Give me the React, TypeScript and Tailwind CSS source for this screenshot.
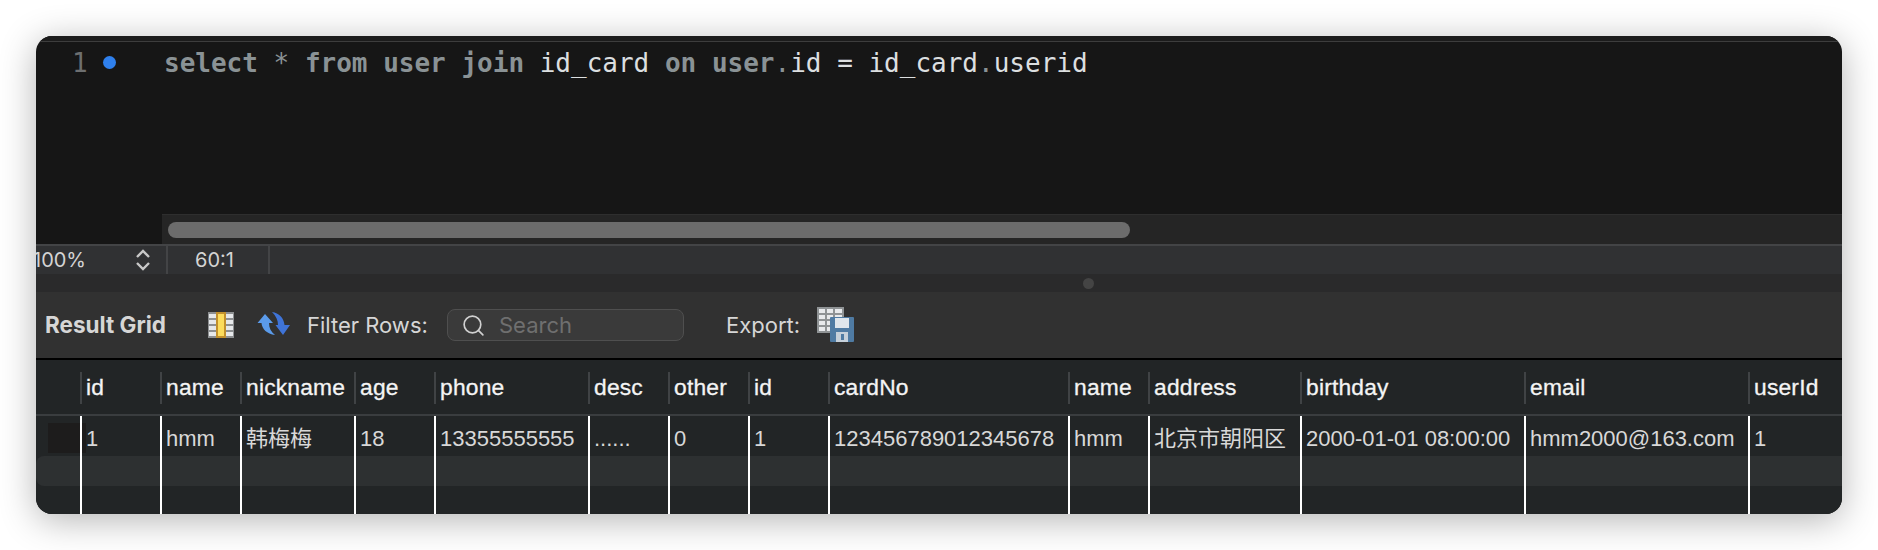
import { Search } from 'lucide-react'

const columns = ['', 'id', 'name', 'nickname', 'age', 'phone', 'desc', 'other', 'id', 'cardNo', 'name', 'address', 'birthday', 'email', 'userId']
const values = ['', '1', 'hmm', '韩梅梅', '18', '13355555555', '......', '0', '1', '123456789012345678', 'hmm', '北京市朝阳区', '2000-01-01 08:00:00', 'hmm2000@163.com', '1']
const gridCols = 'grid grid-cols-[44px_80px_80px_114px_80px_154px_80px_80px_80px_240px_80px_152px_224px_224px_93px]'

function ColumnsIcon() {
  return (
    <svg width="28" height="28" viewBox="0 0 28 28" className="shrink-0">
      <rect x="1" y="1" width="26" height="26" fill="#8d8f91" />
      {[3, 9, 15, 21].map((y) => (
        <g key={y}>
          <rect x="2" y={y} width="7" height="4" fill="#e6e8ea" />
          <rect x="19" y={y} width="7" height="4" fill="#e6e8ea" />
        </g>
      ))}
      <rect x="9" y="1" width="10" height="26" fill="#c2902c" />
      <rect x="11" y="3" width="6" height="22" fill="#fcdc5c" />
    </svg>
  )
}

function RefreshIcon() {
  return (
    <svg width="34" height="28" viewBox="7 6 34 28" className="shrink-0">
      <path d="M15 9 L23 18 L19 18 C19 23 21 27 25 30 C17 29 12 24 11.5 18 L7.5 18 Z" fill="#5b9bea" />
      <path d="M22 7 C29 8 34 13 34.5 20 L40 20 L33 30 L25.5 20 L28 20 C28 15 26 11 22 7 Z" fill="#3f74d8" />
    </svg>
  )
}

function ExportIcon() {
  return (
    <svg width="38" height="36" viewBox="0 0 38 36" className="shrink-0">
      <rect x="0" y="0" width="27" height="26" fill="#8f9395" />
      {[2, 8, 14, 20].map((y) => (
        <g key={y}>
          <rect x="2" y={y} width="6" height="4" fill="#e8eaec" />
          <rect x="10" y={y} width="6" height="4" fill="#e8eaec" />
          <rect x="18" y={y} width="7" height="4" fill="#e8eaec" />
        </g>
      ))}
      <rect x="13" y="10" width="24" height="25" rx="1" fill="#4f7ba3" />
      <rect x="18" y="11" width="14" height="10" fill="#dfe6ec" />
      <rect x="19" y="25" width="12" height="10" fill="#c5d0da" />
      <rect x="24" y="27" width="3" height="6" fill="#4f7ba3" />
    </svg>
  )
}

export default function App() {
  return (
    <div className="h-[550px] bg-white pl-[36px] pt-[36px]">
      <div className="flex h-[478px] w-[1806px] flex-col overflow-hidden rounded-[16px] bg-[#161616] font-['Inter',sans-serif] shadow-[0_6px_36px_rgba(0,0,0,0.3)]">
        {/* query editor */}
        <div className="flex h-[208px] flex-col border-t-[5px] border-[#1c1c1c]">
          <div className="h-px bg-[#3d3d3d]" />
          <div className="flex flex-1 font-['DejaVu_Sans_Mono',monospace] text-[26px] leading-[36px]">
            <div className="flex h-[36px] w-[128px] shrink-0 items-center pl-[36px] pt-[5px] text-[#6d6f70]">
              <span>1</span>
              <span className="ml-[15px] h-[13px] w-[13px] rounded-full bg-[#2f80ed]" />
            </div>
            <div className="whitespace-pre pt-[3px] text-[#dcdfe0]">
              <span className="font-bold text-[#8a9295]">select</span>{' '}
              <span className="text-[#8a9295]">*</span>{' '}
              <span className="font-bold text-[#8a9295]">from user join</span> id_card <span className="font-bold text-[#8a9295]">on user</span>
              <span className="text-[#8a9295]">.</span>id = id_card<span className="text-[#8a9295]">.</span>userid
            </div>
          </div>
          <div className="ml-[126px] flex h-[30px] items-center border-t border-[#2e2e2e] bg-[#252525] pl-[6px]">
            <div className="h-[16px] w-[962px] rounded-full bg-[#6c6c6c]" />
          </div>
        </div>

        {/* status bar */}
        <div className="flex h-[30px] items-center overflow-hidden border-t-2 border-[#434446] bg-[#303133] text-[20px] text-[#d4d4d4]">
          <div className="flex h-full w-[130px] shrink-0 items-center justify-between pr-[15px]">
            <span className="-ml-[3px]">100%</span>
            <svg width="16" height="22" viewBox="0 0 16 22" fill="none" stroke="#c8c8c8" strokeWidth="2.4">
              <path d="M2 8 L8 2 L14 8" />
              <path d="M2 14 L8 20 L14 14" />
            </svg>
          </div>
          <div className="flex h-full w-[104px] shrink-0 items-center border-x-2 border-[#434446] pl-[27px]">60:1</div>
        </div>

        {/* splitter */}
        <div className="flex h-[18px] items-center bg-[#2a2a2b] pl-[1047px]">
          <div className="h-[11px] w-[11px] rounded-full bg-[#444444]" />
        </div>

        {/* toolbar */}
        <div className="flex h-[68px] shrink-0 items-center border-b-2 border-black bg-[#313131] text-[22px] text-[#d6d6d6]">
          <span className="ml-[9px] w-[122px] whitespace-nowrap text-[22.5px] font-bold">Result Grid</span>
          <div className="ml-[40px] w-[50px]">
            <ColumnsIcon />
          </div>
          <div className="w-[50px]">
            <RefreshIcon />
          </div>
          <span className="w-[140px] whitespace-nowrap">Filter Rows:</span>
          <div className="flex h-[32px] w-[237px] items-center rounded-[8px] border border-[#4f4f4f] bg-[#3a3a3a] pl-[13px] text-[#6f6f6f]">
            <Search size={25} strokeWidth={1.6} color="#d0d0d0" />
            <span className="ml-[13px]">Search</span>
          </div>
          <span className="ml-[42px] w-[91px] whitespace-nowrap">Export:</span>
          <ExportIcon />
        </div>

        {/* result grid */}
        <div className="flex-1 bg-[#222526]">
          <div className={`${gridCols} h-[56px] items-center border-b-2 border-[#3a3d3f] pt-[1px] font-['Liberation_Sans',sans-serif] text-[22.8px] tracking-[0.2px] text-[#f4f4f4] [-webkit-text-stroke:0.3px]`}>
            {columns.map((name, i) => (
              <div key={i} className={`flex h-[32px] items-center pl-[4px] ${i > 0 ? 'border-l-2 border-[#404345]' : ''}`}>
                {name}
              </div>
            ))}
          </div>
          <div className={`${gridCols} h-[40px] pt-[4px] font-['Liberation_Sans','Noto_Sans_CJK_SC',sans-serif] text-[22px] text-[#d8d8d8]`}>
            {values.map((value, i) => (
              <div key={i} className={`-mt-[4px] flex items-center whitespace-nowrap pl-[4px] pt-[4px] ${i > 0 ? 'border-l-2 border-white' : ''}`}>
                {i === 0 && <div className="ml-[8px] h-[30px] w-[38px] shrink-0 bg-[#1d1c1c]" />}
                {value}
              </div>
            ))}
          </div>
          <div className={`${gridCols} h-[30px] rounded-l-[8px] bg-[#2d3031]`}>
            {columns.map((_, i) => (
              <div key={i} className={i > 0 ? 'border-l-2 border-white' : ''} />
            ))}
          </div>
          <div className={`${gridCols} h-[28px]`}>
            {columns.map((_, i) => (
              <div key={i} className={i > 0 ? 'border-l-2 border-white' : ''} />
            ))}
          </div>
        </div>
      </div>
    </div>
  )
}
